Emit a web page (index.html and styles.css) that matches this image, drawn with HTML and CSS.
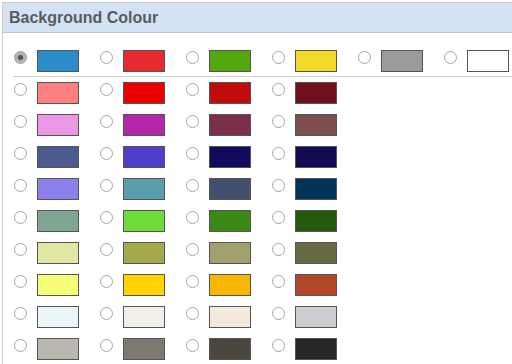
FILE: index.html
```html
<!DOCTYPE html>
<html lang="en">
<head>
    <meta charset="UTF-8">
    <meta name="viewport" content="width=device-width, initial-scale=1.0">
    <title>Background Colour</title>
    <link rel="stylesheet" href="styles.css">
</head>
<body>
    <div class="panel">
        <div class="panel-header">Background Colour</div>
        <form class="panel-body" id="colourForm">
            <div class="row row-main">
                <label class="choice"><input type="radio" name="bg" value="#2b8ccb" checked><span class="swatch" style="background:#2b8ccb"></span></label>
                <label class="choice"><input type="radio" name="bg" value="#e8292f"><span class="swatch" style="background:#e8292f"></span></label>
                <label class="choice"><input type="radio" name="bg" value="#52a80c"><span class="swatch" style="background:#52a80c"></span></label>
                <label class="choice"><input type="radio" name="bg" value="#f4da28"><span class="swatch" style="background:#f4da28"></span></label>
                <label class="choice"><input type="radio" name="bg" value="#9b9b9b"><span class="swatch" style="background:#9b9b9b"></span></label>
                <label class="choice"><input type="radio" name="bg" value="#ffffff"><span class="swatch" style="background:#ffffff"></span></label>
            </div>
            <div class="grid" id="grid"></div>
        </form>
    </div>

    <script>
        const rows = [
            ['#fd7f7f', '#ec0000', '#c20b0b', '#6f111c'],
            ['#ec97e6', '#b228a8', '#7a2e48', '#7e504d'],
            ['#4b5b90', '#4f3ecc', '#120a5c', '#130b52'],
            ['#8c80ea', '#5a9dad', '#41506e', '#023358'],
            ['#7fa593', '#6fdb38', '#3b8a17', '#245a09'],
            ['#e1e6a5', '#a5aa4c', '#a2a070', '#686a43'],
            ['#f6fe78', '#fed300', '#f8b600', '#b3472a'],
            ['#ebf6f8', '#f2efe8', '#f5e9dc', '#cdced2'],
            ['#bab7b0', '#7e7a70', '#4b463e', '#282725']
        ];

        const grid = document.getElementById('grid');
        rows.forEach(colours => {
            const row = document.createElement('div');
            row.className = 'row';
            colours.forEach(c => {
                row.innerHTML += '<label class="choice"><input type="radio" name="bg" value="' + c + '">'
                    + '<span class="swatch" style="background:' + c + '"></span></label>';
            });
            grid.appendChild(row);
        });
    </script>
</body>
</html>
```

FILE: styles.css
```css
body {
    margin: 0;
    font-family: "Liberation Sans", Arial, sans-serif;
    background: #fff;
    overflow: hidden;
}
.panel {
    margin: 2px 0 0 2px;
    border-top: 1px solid #cdcdcd;
    border-left: 1px solid #cdcdcd;
    height: calc(100vh - 3px);
    overflow: hidden;
}
.panel-header {
    height: 29px;
    line-height: 29px;
    padding-left: 6px;
    background: #d4e3f3;
    border-bottom: 1px solid #c6c6c6;
    color: #5b5b5b;
    font-size: 16px;
    font-weight: bold;
}
.panel-body {
    padding: 17px 0 0 10px;
    margin: 0;
}
.row {
    display: flex;
    gap: 21px;
    padding-left: 1px;
}
.row-main {
    padding-bottom: 4px;
    border-bottom: 1px solid #cfcfcf;
}
.grid {
    display: flex;
    flex-direction: column;
    gap: 10px;
    margin-top: 5px;
}
.choice {
    display: flex;
    align-items: flex-start;
    gap: 10px;
    cursor: pointer;
}
.choice input {
    -webkit-appearance: none;
    appearance: none;
    width: 13px;
    height: 13px;
    margin: 1px 0 0 0;
    border: 1px solid #aaa69f;
    border-radius: 50%;
    background: #fff;
    box-sizing: border-box;
    cursor: pointer;
}
.choice input:checked {
    background: radial-gradient(circle, #555 0, #555 2px, #a9a9a9 3px, #c4c4c4 6px);
    border-color: #9a9a9a;
}
.swatch {
    display: block;
    width: 42px;
    height: 22px;
    border: 1px solid #555;
    box-sizing: border-box;
}
```
